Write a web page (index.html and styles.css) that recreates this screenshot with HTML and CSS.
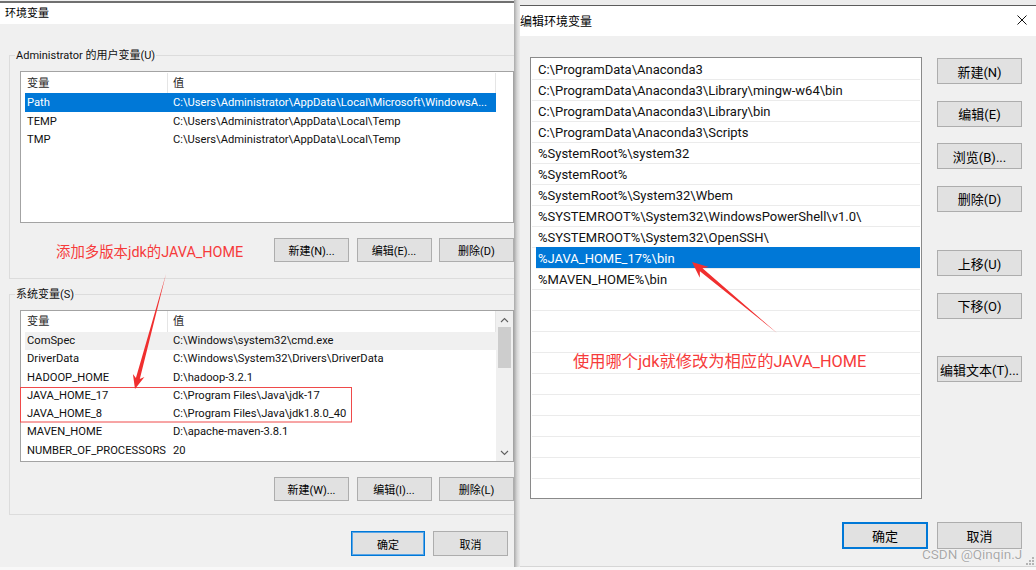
FILE: index.html
```html
<!DOCTYPE html>
<html lang="zh-CN">
<head>
<meta charset="utf-8">
<title>环境变量</title>
<link rel="stylesheet" href="styles.css">
</head>
<body>
<div class="desk">
  <section class="lwin">
    <header class="ltitle">环境变量</header>
    <div class="lbody">
      <fieldset class="grp grp-user">
        <legend>Administrator 的用户变量(U)</legend>
        <div class="lv">
          <div class="lv-main">
            <div class="lv-head"><span class="c1">变量</span><span class="c2">值</span></div>
            <div class="lv-row sel"><span class="c1">Path</span><span class="c2">C:\Users\Administrator\AppData\Local\Microsoft\WindowsA...</span></div>
            <div class="lv-row"><span class="c1">TEMP</span><span class="c2">C:\Users\Administrator\AppData\Local\Temp</span></div>
            <div class="lv-row"><span class="c1">TMP</span><span class="c2">C:\Users\Administrator\AppData\Local\Temp</span></div>
          </div>
        </div>
        <div class="btnrow">
          <span class="note note-left">添加多版本jdk的JAVA_HOME</span>
          <button class="btn lbtn">新建(N)...</button>
          <button class="btn lbtn">编辑(E)...</button>
          <button class="btn lbtn">删除(D)</button>
        </div>
      </fieldset>
      <fieldset class="grp grp-sys">
        <legend>系统变量(S)</legend>
        <div class="lv lv-sys">
          <div class="lv-main">
            <div class="lv-head"><span class="c1">变量</span><span class="c2">值</span></div>
            <div class="lv-row hl"><span class="c1">ComSpec</span><span class="c2">C:\Windows\system32\cmd.exe</span></div>
            <div class="lv-row"><span class="c1">DriverData</span><span class="c2">C:\Windows\System32\Drivers\DriverData</span></div>
            <div class="lv-row"><span class="c1">HADOOP_HOME</span><span class="c2">D:\hadoop-3.2.1</span></div>
            <div class="lv-row"><span class="c1">JAVA_HOME_17</span><span class="c2">C:\Program Files\Java\jdk-17</span></div>
            <div class="lv-row"><span class="c1">JAVA_HOME_8</span><span class="c2">C:\Program Files\Java\jdk1.8.0_40</span></div>
            <div class="lv-row"><span class="c1">MAVEN_HOME</span><span class="c2">D:\apache-maven-3.8.1</span></div>
            <div class="lv-row"><span class="c1">NUMBER_OF_PROCESSORS</span><span class="c2">20</span></div>
          </div>
          <div class="sb">
            <div class="sb-btn"><svg width="9" height="6" viewBox="0 0 9 6"><path d="M1 5 L4.5 1.5 L8 5" fill="none" stroke="#606060" stroke-width="1.1"/></svg></div>
            <div class="sb-thumb"></div>
            <div class="sb-space"></div>
            <div class="sb-btn"><svg width="9" height="6" viewBox="0 0 9 6"><path d="M1 1 L4.5 4.5 L8 1" fill="none" stroke="#606060" stroke-width="1.1"/></svg></div>
          </div>
        </div>
        <div class="btnrow">
          <button class="btn lbtn">新建(W)...</button>
          <button class="btn lbtn">编辑(I)...</button>
          <button class="btn lbtn">删除(L)</button>
        </div>
      </fieldset>
      <div class="lfoot">
        <button class="btn lbtn lok">确定</button>
        <button class="btn lbtn lcancel">取消</button>
      </div>
    </div>
  </section>

  <section class="rwin">
    <div class="rshadow"></div>
    <div class="rmain">
      <header class="rtitle">
        <span>编辑环境变量</span>
        <svg class="close" width="10" height="10" viewBox="0 0 10 10"><path d="M0.5 0.5 L9.5 9.5 M9.5 0.5 L0.5 9.5" stroke="#111" stroke-width="1"/></svg>
      </header>
      <div class="rbody">
        <div class="rtop">
          <div class="rlist">
            <div class="ritem">C:\ProgramData\Anaconda3</div>
            <div class="ritem">C:\ProgramData\Anaconda3\Library\mingw-w64\bin</div>
            <div class="ritem">C:\ProgramData\Anaconda3\Library\bin</div>
            <div class="ritem">C:\ProgramData\Anaconda3\Scripts</div>
            <div class="ritem">%SystemRoot%\system32</div>
            <div class="ritem">%SystemRoot%</div>
            <div class="ritem">%SystemRoot%\System32\Wbem</div>
            <div class="ritem">%SYSTEMROOT%\System32\WindowsPowerShell\v1.0\</div>
            <div class="ritem">%SYSTEMROOT%\System32\OpenSSH\</div>
            <div class="ritem sel">%JAVA_HOME_17%\bin</div>
            <div class="ritem">%MAVEN_HOME%\bin</div>
            <div class="ritem"></div>
            <div class="ritem"></div>
            <div class="ritem"></div>
            <div class="ritem"></div>
            <div class="ritem"></div>
            <div class="ritem"></div>
            <div class="ritem"></div>
            <div class="ritem"></div>
            <div class="ritem"></div>
            <div class="ritem"></div>
          </div>
          <div class="rbtns">
            <button class="btn rbtn">新建(N)</button>
            <button class="btn rbtn">编辑(E)</button>
            <button class="btn rbtn">浏览(B)...</button>
            <button class="btn rbtn">删除(D)</button>
            <button class="btn rbtn gap1">上移(U)</button>
            <button class="btn rbtn">下移(O)</button>
            <button class="btn rbtn gap2">编辑文本(T)...</button>
          </div>
        </div>
        <div class="rfoot">
          <button class="btn rbtn rok">确定</button>
          <button class="btn rbtn">取消</button>
        </div>
      </div>
    </div>
  </section>
</div>

<div class="note note-right">使用哪个jdk就修改为相应的JAVA_HOME</div>
<div class="watermark">CSDN @Qinqin.J</div>

<svg class="marks" width="1036" height="570" viewBox="0 0 1036 570">
  <rect x="20.5" y="387.5" width="331" height="34.5" fill="none" stroke="#ef4a4a" stroke-width="1"/>
  <polygon points="166,274 139.8,378.9 144.4,377.0 135,389 132.9,373.9 135.9,377.9" fill="#f02f2f"/>
  <polygon points="777,333 702.5,268.2 708.8,266.9 692,262 699.8,277.7 699.9,271.2" fill="#f02f2f"/>
  <g fill="#b4b4b4">
    <rect x="1032" y="557" width="2" height="2"/>
    <rect x="1029" y="560" width="2" height="2"/>
    <rect x="1032" y="560" width="2" height="2"/>
    <rect x="1026" y="563" width="2" height="2"/>
    <rect x="1029" y="563" width="2" height="2"/>
    <rect x="1032" y="563" width="2" height="2"/>
  </g>
</svg>
</body>
</html>
```

FILE: styles.css
```css
* { box-sizing: border-box; }
html, body { margin: 0; padding: 0; }
body {
  width: 1036px;
  height: 570px;
  overflow: hidden;
  position: relative;
  background: #f8f8f8;
  font-family: Roboto, "Noto Sans CJK SC", sans-serif;
  color: #000;
}
.desk { display: flex; height: 567px; }

/* ---------- left window ---------- */
.lwin {
  width: 514px;
  height: 567px;
  flex: none;
  background: #f0f0f0;
  overflow: hidden;
  display: flex;
  flex-direction: column;
}
.ltitle {
  margin-top: 1px;
  border-top: 2px solid #707070;
  height: 23px;
  background: #fff;
  padding: 2px 0 0 5px;
  font-size: 11px;
  line-height: 18px;
  font-weight: normal;
}
.lbody { padding: 23px 0 0 9px; flex: 1; }

.grp {
  margin: 0;
  width: 520px;
  min-width: 0;
  border: 1px solid #dcdcdc;
  padding: 8px 14px 15px 5px;
}
.grp legend {
  padding: 2px 1px 0;
  font-size: 11px;
  line-height: 14px;
  color: #111;
}
.grp-sys { margin-top: 7px; padding-bottom: 13px; }

.lv {
  margin-left: 5px;
  height: 152px;
  border: 1px solid #a3a3a3;
  background: #fff;
  display: flex;
  overflow: hidden;
}
.lv-main { width: 475px; flex: none; }
.lv-head {
  display: flex;
  height: 21px;
  line-height: 21px;
  padding-top: 1px;
  font-size: 11.2px;
  color: #2a2a2a;
}
.lv-head .c1 { width: 146px; padding-left: 6px; }
.lv-head .c2 { flex: 1; border-left: 1px solid #e5e5e5; border-right: 1px solid #e5e5e5; padding-left: 5px; }
.lv-row {
  display: flex;
  margin-left: 4px;
  height: 18.5px;
  line-height: 18.5px;
  padding-top: 1px;
  font-size: 11.2px;
  white-space: nowrap;
  color: #111;
}
.lv-sys .lv-head { padding-top: 0; }
.lv-sys .lv-row { height: 18.3px; line-height: 18.3px; padding-top: 0; }
.lv-row .c1 { width: 146px; flex: none; padding-left: 2px; }
.lv-row .c2 { flex: 1; padding-left: 2px; overflow: hidden; }
.lv-row.sel { background: #0078d7; color: #fff; }
.lv-row.hl { background: #f0f0f0; }

.sb {
  width: 17px;
  flex: none;
  background: #f0f0f0;
  display: flex;
  flex-direction: column;
  align-items: center;
}
.sb-btn { width: 17px; height: 17px; display: flex; align-items: center; justify-content: center; }
.sb-thumb { width: 13px; height: 41px; margin-top: -1px; background: #cdcdcd; }
.sb-space { flex: 1; }

.btnrow {
  display: flex;
  align-items: center;
  gap: 7.5px;
  margin-top: 14px;
  margin-left: 5px;
  justify-content: flex-end;
}
.grp-sys .btnrow { margin-top: 15px; }

.btn {
  font-family: inherit;
  color: #000;
  background: #e1e1e1;
  border: 1px solid #adadad;
  padding: 0;
  margin: 0;
}
.lbtn { width: 75px; height: 24px; font-size: 11px; }

.note { color: #f63b3b; white-space: nowrap; }
.note-left {
  margin-left: 36px;
  margin-right: auto;
  margin-top: 6px;
  font-size: 14.4px;
  line-height: 20px;
}

.lfoot {
  display: flex;
  justify-content: flex-end;
  gap: 8px;
  margin-top: 16px;
  padding-right: 6px;
}
.lfoot .lbtn { height: 25px; }
.lok { width: 74px; border-color: #0078d7; box-shadow: inset 0 0 0 1px #5aa5e6; }
.lcancel { width: 75px; }

/* ---------- right window ---------- */
.rwin {
  width: 522px;
  flex: none;
  display: flex;
  background: #ececec;
}
.rshadow {
  width: 6px;
  flex: none;
  background: linear-gradient(to right, #a9a9a9, #d6d6d6 50%, #ececec);
}
.rmain {
  flex: 1;
  margin-top: 5px;
  border-top: 1px solid #5b5b5b;
  border-bottom: 1px solid #d6d6d6;
  background: #f0f0f0;
  display: flex;
  flex-direction: column;
}
.rtitle {
  height: 30px;
  flex: none;
  background: #fff;
  display: flex;
  align-items: center;
  justify-content: space-between;
  padding: 0 9px 2px 0;
  font-size: 12px;
  font-weight: normal;
}
.close { display: block; }
.rbody { flex: 1; display: flex; flex-direction: column; }
.rtop { display: flex; padding: 21px 14px 0 10px; }
.rlist {
  width: 392px;
  height: 442px;
  flex: none;
  border: 1px solid #8a8a8a;
  background: #fff;
  padding-top: 1px;
  overflow: hidden;
}
.ritem {
  height: 21px;
  margin: 0 1px;
  border-bottom: 1px solid #ebebeb;
  padding-left: 6px;
  padding-top: 2px;
  font-size: 13px;
  line-height: 18px;
  white-space: nowrap;
  color: #111;
}
.ritem.sel {
  margin-left: 5px;
  padding-left: 2px;
  background: #0078d7;
  color: #fff;
  box-shadow: 0 -1px 0 #0078d7;
}
.rbtns {
  margin-left: 15px;
  margin-top: 1px;
  width: 85px;
  display: flex;
  flex-direction: column;
}
.rbtn { width: 85px; height: 26px; font-size: 13px; margin-top: 16.5px; }
.rbtns .rbtn:first-child { margin-top: 0; }
.rbtns .gap1 { margin-top: 38.5px; }
.rbtns .gap2 { margin-top: 37.5px; }

.rfoot {
  display: flex;
  justify-content: flex-end;
  gap: 9px;
  margin-top: 23px;
  padding-right: 14px;
}
.rfoot .rbtn { margin-top: 0; height: 27px; }
.rok { width: 86px; border: 2px solid #0078d7; }

/* ---------- annotations ---------- */
.note-right {
  position: absolute;
  left: 573px;
  top: 352px;
  font-size: 16.3px;
  line-height: 20px;
}
.watermark {
  position: absolute;
  left: 922px;
  top: 545px;
  font-size: 13.5px;
  line-height: 18px;
  color: #a9a9a9;
  text-shadow: 0 0 1px #fff, 0 0 1px #fff;
  white-space: nowrap;
}
.marks {
  position: absolute;
  left: 0;
  top: 0;
  pointer-events: none;
}
```
